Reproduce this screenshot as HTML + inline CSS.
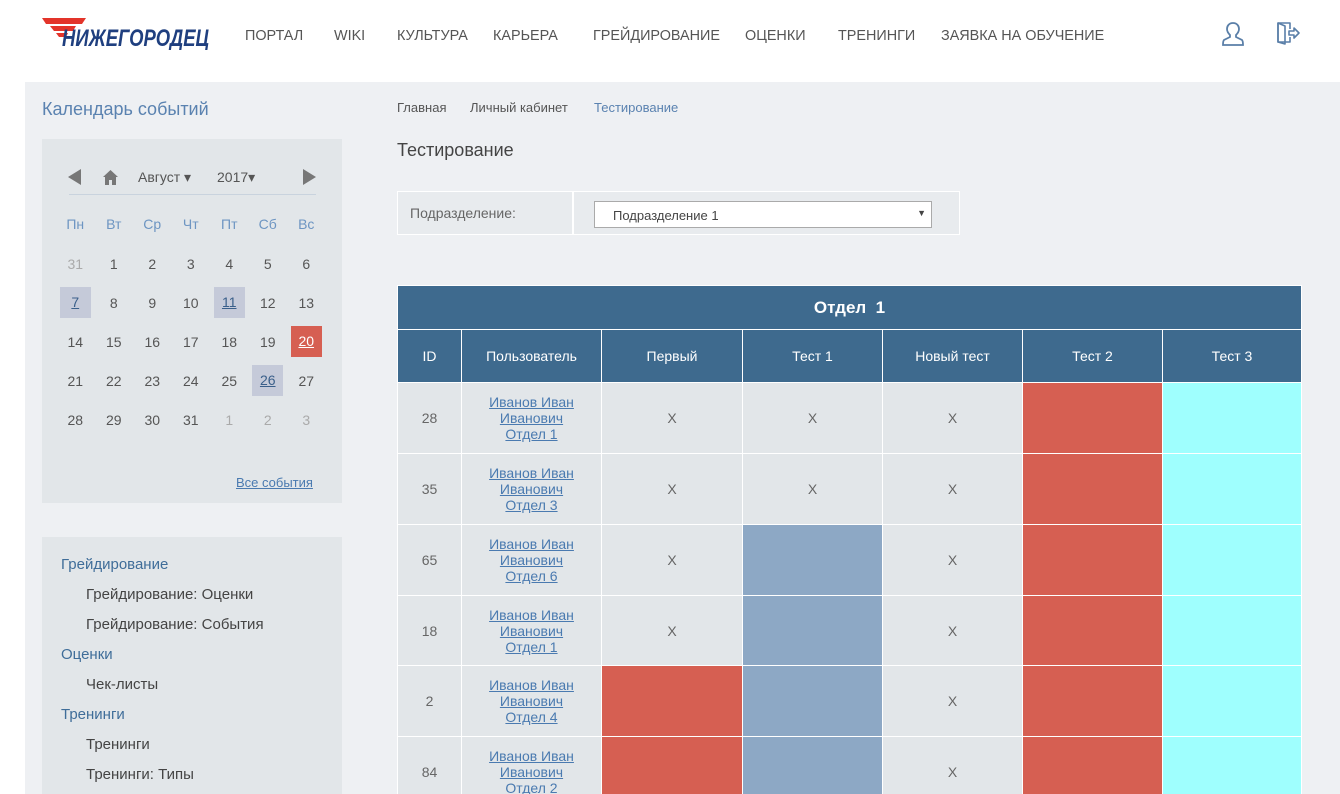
<!DOCTYPE html>
<html><head><meta charset="utf-8"><style>
*{margin:0;padding:0;box-sizing:border-box}
html,body{width:1340px;height:794px;overflow:hidden}
body{background:#fff;font-family:"Liberation Sans","Noto Sans CJK SC",sans-serif;position:relative;color:#555}
.a{position:absolute}
.nav{top:28px;font-size:14.4px;color:#555}
.cal td{width:38.5px;text-align:center;height:39px;font-size:14px;color:#555}
.tb{position:absolute;left:397px;top:285px;border-collapse:collapse;width:905px}
.tb td{border:1px solid #fff;text-align:center;font-size:14px;color:#666}
.tb .h td{background:#3e6a8e;color:#fff}
.g{background:#e2e6e9}.r{background:#d65f52}.b{background:#8da8c5}.c{background:#9ffffe}
.u{color:#4a7ab0;text-decoration:underline;line-height:16px}
.menu div{font-size:15px;color:#444;height:30px}
</style></head><body>
<div class="a" style="left:25px;top:82px;width:1315px;height:712px;background:#eef0f3"></div>
<svg class="a" style="left:42px;top:16px" width="170" height="34" viewBox="0 0 170 34">
<polygon points="0,2 44,2 40,8 4,8" fill="#e3342a"/><polygon points="8,10 34,10 31,15 12,15" fill="#e3342a"/><polygon points="14,17 26,17 24,21 17,21" fill="#e3342a"/>
<text x="20" y="30" font-family="Liberation Sans" font-weight="bold" font-style="italic" font-size="24" fill="#1f3f7f" textLength="147" lengthAdjust="spacingAndGlyphs">НИЖЕГОРОДЕЦ</text></svg>
<div class="a nav" style="left:245px">ПОРТАЛ</div><div class="a nav" style="left:334px">WIKI</div><div class="a nav" style="left:397px">КУЛЬТУРА</div><div class="a nav" style="left:493px">КАРЬЕРА</div><div class="a nav" style="left:593px">ГРЕЙДИРОВАНИЕ</div><div class="a nav" style="left:745px">ОЦЕНКИ</div><div class="a nav" style="left:838px">ТРЕНИНГИ</div><div class="a nav" style="left:941px">ЗАЯВКА НА ОБУЧЕНИЕ</div>
<svg class="a" style="left:1220px;top:21px" width="26" height="26" viewBox="0 0 26 26" fill="none" stroke="#5a7fa8" stroke-width="1.8"><path d="M13 2c-4 0-6 3-6 6 0 3 2 5 3 6v2l-6 3c-1 1-1 3-1 5h20c0-2 0-4-1-5l-6-3v-2c1-1 3-3 3-6 0-3-2-6-6-6z"/></svg>
<svg class="a" style="left:1276px;top:21px" width="28" height="24" viewBox="0 0 28 24" fill="none" stroke="#5a7fa8" stroke-width="1.6" stroke-linejoin="round"><path d="M14 8V2H2v19h12v-5"/><path d="M2 2l7 3v18l-7-2z"/><path d="M13 10h5V7l5 5-5 5v-3h-5z"/></svg>
<div class="a" style="left:42px;top:99px;font-size:18px;color:#5a82b0">Календарь событий</div>
<div class="a" style="left:42px;top:139px;width:300px;height:364px;background:#e2e6e9"></div>
<svg class="a" style="left:67px;top:168px" width="16" height="18"><polygon points="14,1 14,17 1,9" fill="#777"/></svg>
<svg class="a" style="left:102px;top:169px" width="17" height="17"><polygon points="8.5,1 16,8 14,8 14,16 3,16 3,8 1,8" fill="#777"/><rect x="7" y="11" width="3" height="5" fill="#e2e6e9"/></svg>
<div class="a" style="left:138px;top:169px;font-size:14px;color:#555">Август ▾</div>
<div class="a" style="left:217px;top:169px;font-size:14px;color:#555">2017▾</div>
<svg class="a" style="left:301px;top:168px" width="16" height="18"><polygon points="2,1 2,17 15,9" fill="#777"/></svg>
<div class="a" style="left:69px;top:194px;width:247px;height:1px;background:#c9d3de"></div>
<table class="a cal" style="left:56px;top:204px;border-collapse:collapse">
<tr style="height:40px"><td style="color:#6d95c2">Пн</td><td style="color:#6d95c2">Вт</td><td style="color:#6d95c2">Ср</td><td style="color:#6d95c2">Чт</td><td style="color:#6d95c2">Пт</td><td style="color:#6d95c2">Сб</td><td style="color:#6d95c2">Вс</td></tr>
<tr style="height:36px"><td style="color:#aaa">31</td><td>1</td><td>2</td><td>3</td><td>4</td><td>5</td><td>6</td></tr>
<tr><td><span style="display:inline-block;width:31px;height:31px;line-height:31px;background:#c5cad9;color:#3a5f8a;text-decoration:underline">7</span></td><td>8</td><td>9</td><td>10</td><td><span style="display:inline-block;width:31px;height:31px;line-height:31px;background:#c5cad9;color:#3a5f8a;text-decoration:underline">11</span></td><td>12</td><td>13</td></tr>
<tr><td>14</td><td>15</td><td>16</td><td>17</td><td>18</td><td>19</td><td><span style="display:inline-block;width:31px;height:31px;line-height:31px;background:#d65f52;color:#fff;text-decoration:underline">20</span></td></tr>
<tr><td>21</td><td>22</td><td>23</td><td>24</td><td>25</td><td><span style="display:inline-block;width:31px;height:31px;line-height:31px;background:#c5cad9;color:#3a5f8a;text-decoration:underline">26</span></td><td>27</td></tr>
<tr><td>28</td><td>29</td><td>30</td><td>31</td><td style="color:#aaa">1</td><td style="color:#aaa">2</td><td style="color:#aaa">3</td></tr>
</table>
<div class="a" style="left:236px;top:475px;font-size:13px;color:#4a7ab0;text-decoration:underline">Все события</div>
<div class="a menu" style="left:42px;top:537px;width:300px;height:257px;background:#e2e6e9;padding:19px 0 0 19px">
<div style="color:#3f6d99">Грейдирование</div><div style="padding-left:25px">Грейдирование: Оценки</div><div style="padding-left:25px">Грейдирование: События</div><div style="color:#3f6d99">Оценки</div><div style="padding-left:25px">Чек-листы</div><div style="color:#3f6d99">Тренинги</div><div style="padding-left:25px">Тренинги</div><div style="padding-left:25px">Тренинги: Типы</div></div>
<div class="a" style="left:397px;top:100px;font-size:13px;color:#555">Главная</div>
<div class="a" style="left:470px;top:100px;font-size:13px;color:#555">Личный кабинет</div>
<div class="a" style="left:594px;top:100px;font-size:13px;color:#5a82b0">Тестирование</div>
<div class="a" style="left:397px;top:140px;font-size:18px;color:#444">Тестирование</div>
<div class="a" style="left:397px;top:191px;width:563px;height:44px;background:#e8ebee;border:1px solid #fff"></div>
<div class="a" style="left:572px;top:191px;width:2px;height:44px;background:#fff"></div>
<div class="a" style="left:410px;top:205px;font-size:14px;color:#666">Подразделение:</div>
<div class="a" style="left:594px;top:201px;width:338px;height:27px;background:#fff;border:1px solid #aaa;font-size:13px;color:#444;padding:6px 18px">Подразделение 1<span style="position:absolute;right:5px;top:6px;font-size:9px">▼</span></div>
<table class="tb">
<tr class="h"><td colspan="7" style="height:44px;font-size:17px;font-weight:bold">Отдел&nbsp; 1</td></tr>
<tr class="h" style="height:53px"><td style="width:64px">ID</td><td style="width:140px">Пользователь</td><td style="width:141px">Первый</td><td style="width:140px">Тест 1</td><td style="width:140px">Новый тест</td><td style="width:140px">Тест 2</td><td>Тест 3</td></tr>
<tr style="height:71px"><td class="g">28</td><td class="g"><div class="u">Иванов Иван<br>Иванович<br>Отдел 1</div></td><td class="g">X</td><td class="g">X</td><td class="g">X</td><td class="r"></td><td class="c"></td></tr>
<tr style="height:71px"><td class="g">35</td><td class="g"><div class="u">Иванов Иван<br>Иванович<br>Отдел 3</div></td><td class="g">X</td><td class="g">X</td><td class="g">X</td><td class="r"></td><td class="c"></td></tr>
<tr style="height:71px"><td class="g">65</td><td class="g"><div class="u">Иванов Иван<br>Иванович<br>Отдел 6</div></td><td class="g">X</td><td class="b"></td><td class="g">X</td><td class="r"></td><td class="c"></td></tr>
<tr style="height:70px"><td class="g">18</td><td class="g"><div class="u">Иванов Иван<br>Иванович<br>Отдел 1</div></td><td class="g">X</td><td class="b"></td><td class="g">X</td><td class="r"></td><td class="c"></td></tr>
<tr style="height:71px"><td class="g">2</td><td class="g"><div class="u">Иванов Иван<br>Иванович<br>Отдел 4</div></td><td class="r"></td><td class="b"></td><td class="g">X</td><td class="r"></td><td class="c"></td></tr>
<tr style="height:71px"><td class="g">84</td><td class="g"><div class="u">Иванов Иван<br>Иванович<br>Отдел 2</div></td><td class="r"></td><td class="b"></td><td class="g">X</td><td class="r"></td><td class="c"></td></tr>
</table>
</body></html>
